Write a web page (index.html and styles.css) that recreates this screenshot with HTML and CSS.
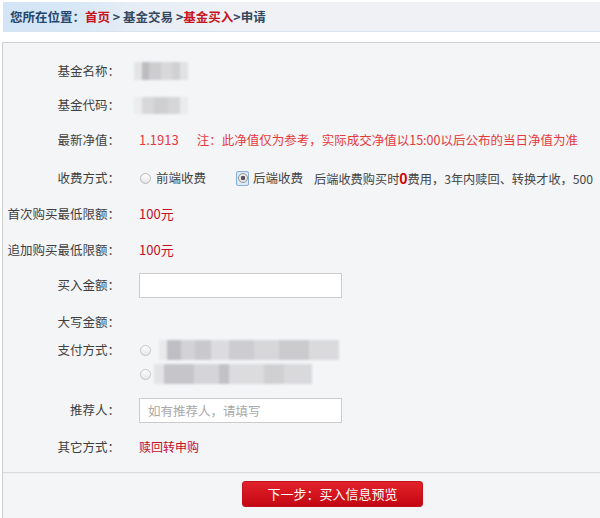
FILE: index.html
```html
<!DOCTYPE html>
<html lang="zh-CN">
<head>
<meta charset="utf-8">
<title>基金买入申请</title>
<link rel="stylesheet" href="styles.css">
</head>
<body>
<div class="crumb">
  <span class="c-lead">您所在位置：</span><span class="c-red">首页</span><span class="c-mid">&nbsp;&gt; 基金交易 &gt;</span><span class="c-red">基金买入</span><span class="c-mid">&gt;申请</span>
</div>
<div class="panel">
  <div class="form">
    <div class="row h34">
      <div class="lbl">基金名称：</div>
      <div class="val"><span class="blur b-name"></span></div>
    </div>
    <div class="row h34">
      <div class="lbl">基金代码：</div>
      <div class="val"><span class="blur b-code"></span></div>
    </div>
    <div class="row h36">
      <div class="lbl">最新净值：</div>
      <div class="val"><span class="nav">1.1913</span><span class="note">注：此净值仅为参考，实际成交净值以15:00以后公布的当日净值为准</span></div>
    </div>
    <div class="row h40">
      <div class="lbl">收费方式：</div>
      <div class="val nowrap">
        <span class="radio"></span><span class="opt">前端收费</span>
        <span class="radio-on"><span class="radio dot"></span></span><span class="opt">后端收费</span>
        <span class="desc">后端收费购买时<b class="zero">0</b>费用，3年内赎回、转换才收，500</span>
      </div>
    </div>
    <div class="row h32">
      <div class="lbl">首次购买最低限额：</div>
      <div class="val"><span class="amt">100元</span></div>
    </div>
    <div class="row h40">
      <div class="lbl">追加购买最低限额：</div>
      <div class="val"><span class="amt">100元</span></div>
    </div>
    <div class="row h30">
      <div class="lbl">买入金额：</div>
      <div class="val"><input class="field" type="text"></div>
    </div>
    <div class="row h32 mt6">
      <div class="lbl">大写金额：</div>
      <div class="val"></div>
    </div>
    <div class="row pay">
      <div class="lbl lbl-top">支付方式：</div>
      <div class="val paylist">
        <div class="payopt"><span class="radio"></span><span class="blur b-pay1"></span></div>
        <div class="payopt"><span class="radio"></span><span class="blur b-pay2"></span></div>
      </div>
    </div>
    <div class="row h48">
      <div class="lbl">推荐人：</div>
      <div class="val"><input class="field" type="text" placeholder="如有推荐人，请填写"></div>
    </div>
    <div class="row h26">
      <div class="lbl">其它方式：</div>
      <div class="val"><span class="link">赎回转申购</span></div>
    </div>
  </div>
  <div class="actions">
    <button class="btn" type="button">下一步：买入信息预览</button>
  </div>
</div>
</body>
</html>
```

FILE: styles.css
```css
html, body {
  margin: 0;
  padding: 0;
  background: #ffffff;
  overflow: hidden;
}
body {
  width: 600px;
  height: 518px;
  font-family: "Noto Sans CJK SC", "Noto Sans", sans-serif;
  font-size: 12.5px;
  color: #444;
}

/* breadcrumb */
.crumb {
  margin: 2px 0 0 3px;
  height: 30px;
  line-height: 29px;
  padding-left: 7px;
  font-weight: bold;
  font-size: 12.5px;
  white-space: nowrap;
  background: linear-gradient(to right, #d2e4f6 0px, #d9e8f6 80px, #e6edf6 130px, #eff1f5 230px, #eff1f5 100%);
  border-bottom: 1px solid #d8e4f0;
  box-sizing: border-box;
}
.c-lead { color: #24466e; }
.c-red { color: #c8141e; }
.c-mid { color: #34485e; }

/* panel */
.panel {
  margin: 10px 0 0 2px;
  border-top: 1px solid #cfcfcf;
  border-left: 1px solid #cfcfcf;
  background: #f4f5f7;
  height: 480px;
}
.form {
  padding: 11px 0 12px 0;
  border-bottom: 1px solid #dcdcdc;
}
.row {
  display: grid;
  grid-template-columns: 117px 1fr;
  column-gap: 19px;
  align-items: center;
}
.h26 { height: 26px; }
.h30 { height: 30px; }
.h32 { height: 32px; }
.h34 { height: 34px; }
.h36 { height: 36px; }
.h40 { height: 40px; }
.h48 { height: 48px; }
.mt6 { margin-top: 6px; }

.lbl {
  text-align: right;
  white-space: nowrap;
  color: #3f3f3f;
  line-height: 16px;
}
.val {
  display: flex;
  align-items: center;
  min-width: 0;
  line-height: 16px;
}
.nowrap { white-space: nowrap; }

.nav { color: #e5393b; font-size: 13px; }
.note { color: #e5393b; margin-left: 18px; white-space: nowrap; }
.amt { color: #c50f27; font-size: 13px; }
.link { color: #c50f27; font-size: 12px; }

/* radios */
.radio {
  display: inline-block;
  width: 9px;
  height: 9px;
  border-radius: 50%;
  border: 1px solid #b9b9b9;
  background: linear-gradient(#ffffff, #e6e6e6);
  flex: none;
  box-sizing: content-box;
}
.val .radio:first-child { margin-left: 1px; }
.opt { margin-left: 5px; color: #444; }
.radio-on {
  display: inline-flex;
  align-items: center;
  justify-content: center;
  width: 11px;
  height: 13px;
  border: 1px solid #86aee0;
  border-radius: 2px;
  background: #dce9f8;
  margin-left: 30px;
  flex: none;
}
.radio.dot {
  width: 8px;
  height: 8px;
  background: radial-gradient(circle, #555 0 2px, #e8e8e8 2.5px);
  border-color: #999;
}
.radio-on + .opt { margin-left: 4px; }
.desc { margin-left: 11px; color: #444; white-space: nowrap; font-size: 12.2px; }
.zero { color: #d40000; font-size: 14px; }

/* blurred placeholders */
.blur {
  display: inline-block;
  filter: blur(1.2px);
}
.b-name {
  width: 54px;
  height: 18px;
  margin-left: -5px;
  background: linear-gradient(to right, #e4e4e6 0 8px, #bdbdc0 8px 15px, #cdcdd0 15px 27px, #d8d8da 27px 38px, #d0d0d3 38px 46px, #e2e2e4 46px);
}
.b-code {
  width: 54px;
  height: 17px;
  margin-left: -5px;
  background: linear-gradient(to right, #ececee 0 8px, #d8d8da 8px 20px, #cfcfd2 20px 34px, #d6d6d8 34px 46px, #ebebed 46px);
}
.paylist {
  display: flex;
  flex-direction: column;
  align-items: flex-start;
}
.pay { align-items: start; }
.lbl-top { padding-top: 4px; }
.payopt {
  height: 24px;
  display: flex;
  align-items: center;
}
.payopt .radio { margin-left: 3px; border-color: #c4c4c4; }
.b-pay1 {
  width: 180px;
  height: 20px;
  margin-left: 8px;
  background: linear-gradient(to right, #e9e9ec 0 8px, #bfbfc3 8px 22px, #d3d3d6 22px 36px, #c9c9cd 36px 52px, #dcdcdf 52px 70px, #cdcdd1 70px 95px, #d7d7da 95px 120px, #cbcbce 120px 150px, #dadadd 150px 180px);
}
.b-pay2 {
  width: 158px;
  height: 20px;
  margin-left: 3px;
  background: linear-gradient(to right, #e4e4e7 0 10px, #c6c6ca 10px 40px, #d5d5d8 40px 65px, #c2c2c6 65px 75px, #dcdcdf 75px 110px, #d0d0d3 110px 130px, #d9d9dc 130px 158px);
}

/* inputs */
.field {
  width: 203px;
  height: 25px;
  box-sizing: border-box;
  border: 1px solid #cccccc;
  background: #ffffff;
  padding: 0 8px;
  margin: 0;
  font-family: "Noto Sans CJK SC", "Noto Sans", sans-serif;
  font-size: 12.5px;
  color: #333;
  outline: none;
}
.field::placeholder { color: #a9a9a9; }

/* actions */
.actions {
  padding: 7px 0 0 239px;
  border-top: 1px solid #eeeeee;
}
.btn {
  width: 181px;
  height: 26px;
  border: 1px solid #c0101b;
  border-radius: 3px;
  background: linear-gradient(#e3222b, #c30711);
  color: #ffffff;
  font-family: "Noto Sans CJK SC", "Noto Sans", sans-serif;
  font-size: 13px;
  line-height: 24px;
  padding: 0;
  cursor: pointer;
}
```
